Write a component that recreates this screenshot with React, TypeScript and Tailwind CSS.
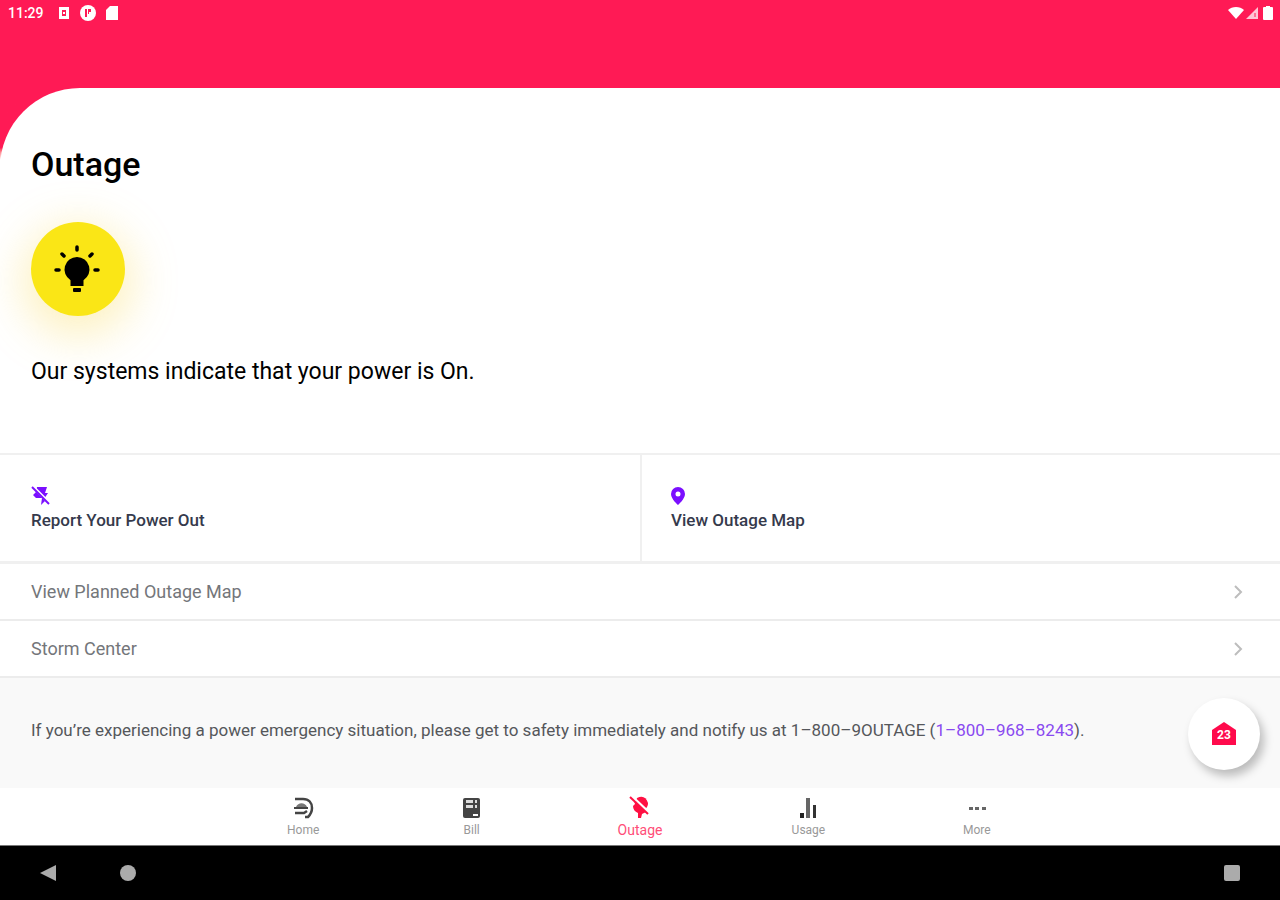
import type { ReactNode } from "react";

interface NavItem {
  label: string;
  icon: ReactNode;
  active?: boolean;
}

function StatusBar() {
  return (
    <div className="flex h-6 items-center justify-between pr-1 pl-2 text-white">
      <div className="flex items-center gap-3">
        <span className="text-sm leading-6 font-medium">11:29</span>
        <svg className="size-4" viewBox="0 0 16 16" fill="currentColor">
          <path fillRule="evenodd" d="M3 2h10v12H3zM6 5v6h4V5z" />
          <path d="M7 7h2v2H7z" />
        </svg>
        <svg className="-ml-1 size-4" viewBox="0 0 16 16" fill="currentColor">
          <circle cx="8" cy="8" r="8" />
          <path d="M5 4h2v8H5zM8 4h3v3H9v2H8z" fill="#ff1a55" />
        </svg>
        <svg className="-ml-1 size-4" viewBox="0 0 16 16" fill="currentColor">
          <path d="M6 1h8v14H2V5z" />
        </svg>
      </div>
      <div className="flex items-center">
        <svg className="h-4 w-4" viewBox="0 0 16 16" fill="currentColor">
          <path d="M8 14L0 5c4-4 12-4 16 0z" />
        </svg>
        <svg className="h-4 w-4" viewBox="0 0 16 16">
          <path d="M14 2v12H2z" fill="#fff" fillOpacity=".75" />
          <path d="M11 8v4" stroke="#ff1a55" />
        </svg>
        <svg className="h-4 w-4" viewBox="0 0 16 16" fill="currentColor">
          <path d="M6 1h4v1h2q1 0 1 1v11q0 1-1 1H4q-1 0-1-1V3q0-1 1-1h2z" />
        </svg>
      </div>
    </div>
  );
}

function PowerOnBadge() {
  return (
    <div className="flex size-[94px] items-center justify-center rounded-full bg-[#fae616] shadow-[0_12px_44px_8px_rgba(250,215,80,0.36)]">
      <svg className="size-12" viewBox="0 0 48 48">
        <path d="M23 12a12.500 12.500 0 0 0-6.500 23.200V41h13v-5.800A12.500 12.500 0 0 0 23 12z" />
        <rect x="19" y="43" width="8" height="4" rx="1" />
        <g stroke="#000" strokeWidth="3.500" strokeLinecap="round">
          <path d="M23 2v3M2 25h3M41 25h3M8 9l2 2M38 9l-2 2" />
        </g>
      </svg>
    </div>
  );
}

function PlugOffIcon() {
  return (
    <svg className="size-5" viewBox="0 0 20 20" fill="#7b0fff">
      <path d="M6 1h10l-2 6h3l-4 6-8-7z" />
      <path d="M2 9l3-3 9 9-4 4 1-7H5z" />
      <path d="M2 0l17 17" stroke="#fff" strokeWidth="2" />
      <path d="M1 1l17 17" stroke="#7b0fff" strokeWidth="2" />
    </svg>
  );
}

function PinIcon() {
  return (
    <svg className="h-5 w-[14px]" viewBox="0 0 14 20" fill="#7b0fff">
      <path fillRule="evenodd" d="M7 1a7 7 0 0 0-7 7c0 5 7 11 7 11s7-6 7-11a7 7 0 0 0-7-7zm0 4.500a2.500 2.500 0 1 1 0 5 2.500 2.500 0 0 1 0-5z" />
    </svg>
  );
}

function Chevron() {
  return (
    <svg className="size-4" viewBox="0 0 16 16" fill="none" stroke="#bdbdbd" strokeWidth="2">
      <path d="M5 2l6 6-6 6" />
    </svg>
  );
}

const links = ["View Planned Outage Map", "Storm Center"];

const navItems: NavItem[] = [
  {
    label: "Home",
    icon: (
      <svg className="size-6" viewBox="0 0 24 24" fill="none" stroke="#444" strokeWidth="2.500">
        <path d="M4 3h8c6 0 9 4 9 9 0 4-2 7-4 9h-3" />
        <path d="M5 11c2-5 9-5 11 0z" fill="#777" stroke="none" />
        <path d="M3 12h14" strokeWidth="2" />
        <path d="M4 17h9l3-2" />
      </svg>
    )
  },
  {
    label: "Bill",
    icon: (
      <svg className="size-6" viewBox="0 0 24 24" fill="#444">
        <rect x="3" y="2" width="17" height="20" rx="2" />
        <path d="M6 4h7v3H6zM6 9h7v3H6zM15 4h2v3h-2zM15 9h2v3h-2z" fill="#ddd" />
        <path d="M13 18h5v2h-5z" fill="#fff" />
      </svg>
    )
  },
  {
    label: "Outage",
    active: true,
    icon: (
      <svg className="size-6" viewBox="0 0 24 24" fill="#ff1043">
        <path d="M9 2q8-4 11 5 0 4-3 6L8 5z" />
        <path d="M6 5l12 11-4 2-1 4h-3v-5q-5-2-5-7l2-2z" />
        <path d="M4 0l18 17" stroke="#fff" strokeWidth="2" />
        <path d="M2 1l18 17" stroke="#ff1043" strokeWidth="2" />
      </svg>
    )
  },
  {
    label: "Usage",
    icon: (
      <svg className="size-6" viewBox="0 0 24 24" fill="#666">
        <path d="M4 17h4v5H4z" fill="#222" />
        <path d="M10 2h4v20h-4z" />
        <path d="M17 9h3v13h-3z" fill="#333" />
      </svg>
    )
  },
  {
    label: "More",
    icon: (
      <svg className="size-6" viewBox="0 0 24 24" fill="#666">
        <path d="M4 11h4v3H4zM10 11h4v3h-4zM17 11h4v3h-4z" />
      </svg>
    )
  }
];

export default function App() {
  return (
    <div className="flex min-h-screen flex-col bg-white font-[Roboto,sans-serif]">
      <header className="bg-[#ff1a55] pt-px pb-[63px]">
        <StatusBar />
      </header>

      <main className="flex flex-1 flex-col">
        <div className="bg-linear-to-b from-[#ff1a55] from-[60px] to-white to-[72px]">
          <section className="rounded-tl-[80px] bg-white px-[31px] pt-14 pb-[65px]">
            <h1 className="text-[34px] leading-10 font-medium text-black">Outage</h1>
            <div className="pt-[38px] pb-10">
              <PowerOnBadge />
            </div>
            <p className="text-[23px] leading-8 text-black">Our systems indicate that your power is On.</p>
          </section>
        </div>

        <section className="grid grid-cols-2 border-t-2 border-b-[3px] border-[#f0f0f0]">
          <button className="flex flex-col items-start px-[31px] pt-[31px] pb-[27px] text-left text-[17px] leading-7 font-medium text-[#353a4c]">
            <PlugOffIcon />
            Report Your Power Out
          </button>
          <button className="flex flex-col items-start border-l-2 border-[#f0f0f0] px-[29px] pt-[31px] pb-[27px] text-left text-[17px] leading-7 font-medium text-[#353a4c]">
            <PinIcon />
            View Outage Map
          </button>
        </section>

        <nav>
          {links.map((label) => (
            <a
              key={label}
              href="#"
              className="flex h-[57px] items-center justify-between border-b-2 border-[#ececec] pr-[34px] pl-[31px] text-lg text-[#74767a]"
            >
              {label}
              <Chevron />
            </a>
          ))}
        </nav>

        <section className="relative flex-1 bg-[#f9f9f9] px-[31px] py-10">
          <p className="pr-20 text-[17px] leading-6 text-[#55575b]">
            If you’re experiencing a power emergency situation, please get to safety immediately and notify us at
            1–800–9OUTAGE (
            <a href="tel:1-800-968-8243" className="text-[#8a4af0]">
              1–800–968–8243
            </a>
            ).
          </p>
          <button
            aria-label="Messages"
            className="absolute top-5 right-5 flex size-[72px] items-center justify-center rounded-full bg-white shadow-[4px_6px_10px_rgba(0,0,0,0.25)]"
          >
            <svg className="size-6" viewBox="0 0 24 24">
              <path d="M12 0l12 8v15H0V8z" fill="#ff0a4c" />
              <text x="12" y="17" textAnchor="middle" fontSize="12" fontWeight="700" fill="#fff">
                23
              </text>
            </svg>
          </button>
        </section>
      </main>

      <footer>
        <nav className="flex h-[57px] justify-center">
          <div className="flex w-full max-w-[842px]">
            {navItems.map((item) => (
              <a key={item.label} href="#" className="flex flex-1 flex-col items-center pt-2">
                {item.icon}
                {item.active ? (
                  <span className="text-sm leading-5 text-[#ff4d78]">{item.label}</span>
                ) : (
                  <span className="text-xs leading-5 text-[#999]">{item.label}</span>
                )}
              </a>
            ))}
          </div>
        </nav>
        <div className="flex h-[55px] items-center justify-between border-t border-[#777] bg-black px-10">
          <div className="flex items-center gap-16">
            <button aria-label="Back">
              <svg className="size-4" viewBox="0 0 16 16" fill="#ababab">
                <path d="M16 0v16L0 8z" />
              </svg>
            </button>
            <button aria-label="Home screen" className="size-4 rounded-full bg-[#ababab]" />
          </div>
          <button aria-label="Recent apps" className="size-4 rounded-xs bg-[#ababab]" />
        </div>
      </footer>
    </div>
  );
}
